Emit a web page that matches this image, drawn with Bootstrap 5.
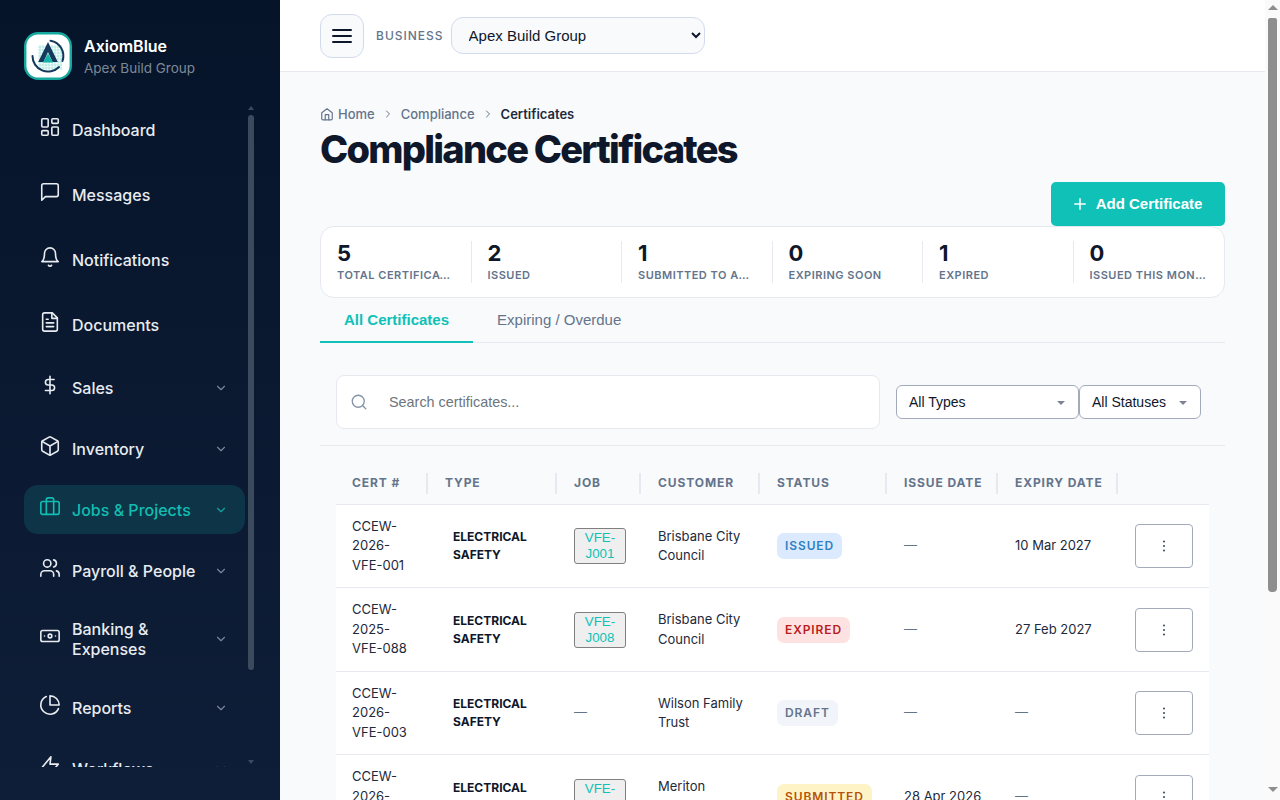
<!DOCTYPE html>
<html lang="en">
<head>
    <meta charset="UTF-8">
    <meta name="viewport" content="width=device-width, initial-scale=1.0">
    <title>Compliance Certificates</title>
    <link href="https://cdn.jsdelivr.net/npm/bootstrap@5.3.3/dist/css/bootstrap.min.css" rel="stylesheet">
    <style>
        body { font-family: "Inter", sans-serif; background: #f8fafc; color: #0f172a; }
        /* sidebar */
        .side-panel { width: 280px; height: 100vh; position: sticky; top: 0; flex-shrink: 0; background: linear-gradient(180deg, #06142a 0%, #0f1e38 100%); padding: 32px 24px 33px; }
        .brand-row { gap: 12px; }
        .brand-logo { width: 48px; height: 48px; flex-shrink: 0; }
        .brand-name { font-size: 16px; font-weight: 600; line-height: 20px; color: #fff; margin-top: 4px; }
        .brand-sub { font-size: 13.5px; line-height: 20px; margin-top: 2px; color: #7d8897; }
        .nav-holder { margin-top: 23px; min-height: 0; }
        .side-nav { width: 221px; overflow: hidden; gap: 12px; flex-wrap: nowrap; min-height: 0; }
        .side-link { display: flex; align-items: center; flex-shrink: 0; min-height: 53px; padding: 12px 17px 12px 15px; font-size: 16px; font-weight: 500; line-height: 20px; color: #e8ecf1; border-radius: 14px; text-decoration: none; }
        .side-link.has-sub { min-height: 49px; }
        .side-link .ico { width: 22px; height: 22px; margin-right: 11px; margin-top: -6px; flex-shrink: 0; fill: none; stroke: currentColor; stroke-width: 1.75; stroke-linecap: round; stroke-linejoin: round; }
        .side-link .chev { width: 14px; height: 14px; margin-left: auto; flex-shrink: 0; fill: none; stroke: #79859a; stroke-width: 2; stroke-linecap: round; stroke-linejoin: round; }
        .side-link.current { background: #0e3547; color: #11bdb2; }
        .side-link.current .chev { stroke: #11a7a0; }
        /* the two scrollbars */
        .nav-rail { width: 11px; flex-shrink: 0; padding: 3px 0; }
        .nav-rail .rail-up { border-bottom: 4px solid #3c4a5e; border-left: 3px solid transparent; border-right: 3px solid transparent; width: 0; margin: 0 auto; }
        .nav-rail .rail-down { border-top: 4px solid #3c4a5e; border-left: 3px solid transparent; border-right: 3px solid transparent; width: 0; margin: 90px auto 0; }
        .nav-rail .rail-thumb { width: 6px; height: 555px; margin: 5px auto 0; background: #3c4a5e; border-radius: 3px; }
        .page-rail { width: 15px; height: 100vh; position: sticky; top: 0; flex-shrink: 0; background: #fafafa; padding-top: 5px; }
        .page-rail .rail-up { border-bottom: 5px solid #8e8e8e; border-left: 5px solid transparent; border-right: 5px solid transparent; width: 0; margin: 0 0 0 3px; }
        .page-rail .rail-thumb { width: 9px; height: 574px; margin: 8px 0 0 3px; background: #8e8e8e; border-radius: 2px 2px 4px 4px; }
        .page-rail .rail-down { border-top: 5px solid #8e8e8e; border-left: 5px solid transparent; border-right: 5px solid transparent; width: 0; margin: 195px 0 0 3px; }
        /* top bar */
        .top-strip { height: 72px; background: #fff; border-bottom: 1px solid #e6e9ef; padding: 0 40px; }
        .menu-btn { width: 44px; height: 44px; border: 1px solid #d2daee; border-radius: 12px; background: #f8fafc; padding: 0; }
        .biz-label { font-size: 12px; font-weight: 500; letter-spacing: 1px; color: #64748b; margin: 0 7px 0 12px; }
        .biz-select { width: 254px; height: 37px; border: 1px solid #d2daee; border-radius: 12px; background-color: #f8fafc; padding: 0 10px 0 13px; font-family: "Liberation Sans", sans-serif; font-size: 15px; color: #0f172a; }
        /* page head */
        .page-body { padding: 34px 40px 150px; }
        .crumbs { font-size: 13px; font-weight: 500; line-height: 16px; color: #64748b; }
        .crumbs a { color: #64748b; text-decoration: none; }
        .crumbs b { font-weight: 600; color: #1e293b; }
        .crumbs svg { fill: none; stroke: #64748b; stroke-width: 2; stroke-linecap: round; stroke-linejoin: round; }
        .crumbs .sep { margin: 0 7px; }
        .page-title { font-size: 38px; font-weight: 800; line-height: 46px; letter-spacing: -1.75px; color: #0f172a; margin: 4px 0 10px; }
        .add-btn { height: 44px; width: 174px; background: #0fc1b6; border: 0; border-radius: 5px; color: #fff; font-family: "Liberation Sans", sans-serif; font-size: 15px; font-weight: 700; padding: 0; gap: 10px; }
        .add-btn:hover { background: #0fc1b6; color: #fff; }
        /* stats */
        .stat-strip { background: #fff; border: 1px solid #e6e9ef; border-radius: 14px; padding: 14px 0; display: grid; grid-template-columns: repeat(6, 1fr); }
        .stat-cell { padding: 0 16px; border-right: 1px solid #e6e9ef; min-width: 0; height: 42px; }
        .stat-cell:last-child { border-right: 0; }
        .stat-num { font-size: 22px; font-weight: 700; line-height: 25px; color: #0f172a; }
        .stat-lbl { font-size: 11px; font-weight: 600; line-height: 19px; letter-spacing: .5px; text-transform: uppercase; color: #64748b; white-space: nowrap; overflow: hidden; text-overflow: ellipsis; }
        /* tabs */
        .cert-tabs { border-bottom: 1px solid #e6e9ef; }
        .cert-tabs .nav-link { height: 45px; padding: 0 24px; border: 0; border-bottom: 2px solid transparent; border-radius: 0; margin-bottom: -1px; font-family: "Liberation Sans", sans-serif; font-size: 15px; line-height: 44px; color: #64748b; background: none; }
        .cert-tabs .nav-link.active { color: #0fc1b6; font-weight: 700; border-bottom-color: #0fc1b6; background: none; }
        /* toolbar */
        .tool-row { padding: 32px 24px 16px 16px; border-bottom: 1px solid #e6e9ef; }
        .search-box { height: 54px; flex: 1; background: #fff; border: 1px solid #e6e9ef; border-radius: 8px; padding-left: 13px; margin-right: 16px; }
        .search-box svg { flex-shrink: 0; fill: none; stroke: #8593a8; stroke-width: 1.75; stroke-linecap: round; }
        .search-box .form-control { border: 0; background: none; box-shadow: none; font-family: "Liberation Sans", sans-serif; font-size: 14.4px; padding: 2px 0 0 21px; }
        .search-box .form-control::placeholder { color: #6c757d; }
        .pick-btn { height: 34px; background: #fff; border: 1px solid #a3abbb; border-radius: 6px; font-family: "Liberation Sans", sans-serif; font-size: 14px; color: #0f172a; padding: 1px 13px 0 12px; display: flex; align-items: center; justify-content: space-between; }
        .pick-btn::after { content: ""; border-top: 4px solid #7c8494; border-left: 4px solid transparent; border-right: 4px solid transparent; }
        .pick-types { width: 183px; }
        .pick-status { width: 122px; }
        /* table */
        .cert-wrap { margin: 16px 16px 0; }
        .cert-table { table-layout: fixed; width: 873px; margin: 0; font-size: 13px; line-height: 19.5px; }
        .cert-table th, .cert-table td { padding: 12px 15px 12px 17px; vertical-align: middle; border-bottom: 1px solid #e6e9ef; color: #1e293b; }
        .cert-table th { position: relative; height: 42.4px; padding-top: 0; padding-bottom: 0; background: #f8fafc; font-size: 12px; font-weight: 700; letter-spacing: .9px; text-transform: uppercase; color: #64748b; white-space: nowrap; }
        .cert-table th:not(:last-child)::after { content: ""; position: absolute; right: 0; top: 11px; height: 21px; width: 2px; background: #e6e9ef; }
        .cert-table td { background: #fff; }
        .cert-table th:first-child, .cert-table td:first-child { padding-left: 16px; padding-right: 16px; }
        .cert-table td.none-dash { color: #64748b; }
        .c-cert { width: 92px; } .c-type { width: 129px; } .c-job { width: 84px; } .c-cust { width: 119px; }
        .c-stat { width: 127px; } .c-issue { width: 111px; } .c-exp { width: 120px; } .c-act { width: 91px; }
        .cert-table .pin-col { position: sticky; right: 0; padding: 0 16px 0 17px; box-shadow: -2px 0 3px rgba(15, 23, 42, .025); }
        .type-txt { display: block; padding-left: 8px; font-size: 12px; font-weight: 700; line-height: 18px; text-transform: uppercase; color: #0f172a; }
        .job-chip { width: 52px; padding: 1px 6px; font-family: "Liberation Sans", sans-serif; font-size: 13.333px; line-height: 16px; color: #0fc1b6; background: #efefef; border: 1px solid #808080; border-radius: 3px; }
        .state-tag { display: inline-block; height: 26px; padding: 0 8px; border-radius: 7px; font-size: 12px; font-weight: 600; line-height: 26px; letter-spacing: .9px; text-transform: uppercase; }
        .st-issued { background: #dbeafe; color: #2f80c2; }
        .st-expired { background: #fee2e2; color: #b91c1c; }
        .st-draft { background: #f1f5f9; color: #64748b; }
        .st-sub { background: #fef3c7; color: #b45309; }
        .kebab-btn { width: 58px; height: 44px; background: #fff; border: 1px solid #a3abbb; border-radius: 4px; padding: 0; display: flex; align-items: center; justify-content: center; }
    </style>
</head>
<body>
<div class="d-flex">
    <aside class="side-panel d-flex flex-column">
        <div class="brand-row d-flex align-items-start flex-shrink-0">
            <svg class="brand-logo" viewBox="0 0 48 48">
                <rect x="1.200" y="1.200" width="45.600" height="45.600" rx="13" fill="#fff" stroke="#14a89f" stroke-width="2.400"/>
                <path d="M14 15h24M14 18h24M14 21h24M14 24h24M14 27h24M14 30h24M14 33h24M14 36h24M16 13v25M19 13v25M22 13v25M25 13v25M28 13v25M31 13v25M34 13v25M37 13v25" stroke="#a3e4de" stroke-width=".8"/>
                <path d="M26.500 8.700A15.500 15.500 0 0 1 38.500 29M35 35A15.500 15.500 0 0 1 8.500 24" fill="none" stroke="#14395c" stroke-width="2" stroke-linecap="round"/>
                <path d="M24 10 33.800 30h-5.300L24 20l-4.500 10h-5.300z" fill="#14395c"/>
                <path d="M24 21.500 29 30.500H19z" fill="#14b3a8"/>
            </svg>
            <div>
                <div class="brand-name">AxiomBlue</div>
                <div class="brand-sub">Apex Build Group</div>
            </div>
        </div>
        <div class="nav-holder d-flex flex-grow-1">
            <nav class="side-nav nav flex-column">
                <a class="side-link" href="#"><svg class="ico" viewBox="0 0 24 24"><rect x="3" y="3" width="7" height="9" rx="1"/><rect x="14" y="3" width="7" height="5" rx="1"/><rect x="14" y="12" width="7" height="9" rx="1"/><rect x="3" y="16" width="7" height="5" rx="1"/></svg>Dashboard</a>
                <a class="side-link" href="#"><svg class="ico" viewBox="0 0 24 24"><path d="M21 15a2 2 0 0 1-2 2H7l-4 4V5a2 2 0 0 1 2-2h14a2 2 0 0 1 2 2z"/></svg>Messages</a>
                <a class="side-link" href="#"><svg class="ico" viewBox="0 0 24 24"><path d="M6 8a6 6 0 0 1 12 0c0 7 3 9 3 9H3s3-2 3-9"/><path d="M10.300 21a1.940 1.940 0 0 0 3.400 0"/></svg>Notifications</a>
                <a class="side-link" href="#"><svg class="ico" viewBox="0 0 24 24"><path d="M14.500 2H6a2 2 0 0 0-2 2v16a2 2 0 0 0 2 2h12a2 2 0 0 0 2-2V7.500L14.500 2z"/><path d="M14 2v6h6M16 13H8M16 17H8M10 9H8"/></svg>Documents</a>
                <a class="side-link has-sub" href="#"><svg class="ico" viewBox="0 0 24 24"><path d="M12 2.500v19M16.500 6H10a3 3 0 0 0 0 6h4a3 3 0 0 1 0 6H7"/></svg>Sales<svg class="chev" viewBox="0 0 24 24"><path d="m6 9 6 6 6-6"/></svg></a>
                <a class="side-link has-sub" href="#"><svg class="ico" viewBox="0 0 24 24"><path d="M21 8a2 2 0 0 0-1-1.730l-7-4a2 2 0 0 0-2 0l-7 4A2 2 0 0 0 3 8v8a2 2 0 0 0 1 1.730l7 4a2 2 0 0 0 2 0l7-4A2 2 0 0 0 21 16Z"/><path d="m3.300 7 8.700 5 8.700-5M12 22V12"/></svg>Inventory<svg class="chev" viewBox="0 0 24 24"><path d="m6 9 6 6 6-6"/></svg></a>
                <a class="side-link has-sub current" href="#"><svg class="ico" viewBox="0 0 24 24"><rect x="2" y="6" width="20" height="14" rx="2"/><path d="M16 20V4a2 2 0 0 0-2-2h-4a2 2 0 0 0-2 2v16"/></svg>Jobs &amp; Projects<svg class="chev" viewBox="0 0 24 24"><path d="m6 9 6 6 6-6"/></svg></a>
                <a class="side-link has-sub" href="#"><svg class="ico" viewBox="0 0 24 24"><path d="M16 21v-2a4 4 0 0 0-4-4H6a4 4 0 0 0-4 4v2"/><circle cx="9" cy="7" r="4"/><path d="M22 21v-2a4 4 0 0 0-3-3.870M16 3.130a4 4 0 0 1 0 7.750"/></svg>Payroll &amp; People<svg class="chev" viewBox="0 0 24 24"><path d="m6 9 6 6 6-6"/></svg></a>
                <a class="side-link has-sub" href="#"><svg class="ico" viewBox="0 0 24 24"><rect x="2" y="6" width="20" height="12" rx="2"/><circle cx="12" cy="12" r="2"/><path d="M6 12h.01M18 12h.01"/></svg><span>Banking &amp; Expenses</span><svg class="chev" viewBox="0 0 24 24"><path d="m6 9 6 6 6-6"/></svg></a>
                <a class="side-link has-sub" href="#"><svg class="ico" viewBox="0 0 24 24"><path d="M21.210 15.890A10 10 0 1 1 8 2.830"/><path d="M22 12A10 10 0 0 0 12 2v10z"/></svg>Reports<svg class="chev" viewBox="0 0 24 24"><path d="m6 9 6 6 6-6"/></svg></a>
                <a class="side-link has-sub" href="#"><svg class="ico" viewBox="0 0 24 24"><path d="M13 2 3 14h9l-1 8 10-12h-9l1-8z"/></svg>Workflows<svg class="chev" viewBox="0 0 24 24"><path d="m6 9 6 6 6-6"/></svg></a>
            </nav>
            <div class="nav-rail">
                <div class="rail-up"></div>
                <div class="rail-thumb"></div>
                <div class="rail-down"></div>
            </div>
        </div>
    </aside>

    <div class="flex-grow-1" style="min-width:0">
        <header class="top-strip d-flex align-items-center">
            <button class="menu-btn d-flex align-items-center justify-content-center" type="button" aria-label="Menu">
                <svg width="20" height="16" viewBox="0 0 20 16"><path d="M1 2h18M1 8h18M1 14h18" stroke="#0f172a" stroke-width="2" stroke-linecap="round"/></svg>
            </button>
            <span class="biz-label">BUSINESS</span>
            <select class="biz-select"><option>Apex Build Group</option></select>
        </header>

        <main class="page-body">
            <div class="crumbs d-flex align-items-center">
                <svg width="14" height="14" viewBox="0 0 24 24" class="me-1"><path d="m3 10 9-7 9 7v10a2 2 0 0 1-2 2H5a2 2 0 0 1-2-2z"/><path d="M9 22v-9h6v9"/></svg>
                <a href="#">Home</a>
                <svg width="12" height="12" viewBox="0 0 24 24" class="sep"><path d="m9 6 6 6-6 6"/></svg>
                <a href="#">Compliance</a>
                <svg width="12" height="12" viewBox="0 0 24 24" class="sep"><path d="m9 6 6 6-6 6"/></svg>
                <b>Certificates</b>
            </div>
            <h1 class="page-title">Compliance Certificates</h1>
            <div class="d-flex justify-content-end">
                <button class="btn add-btn d-flex align-items-center justify-content-center" type="button">
                    <svg width="12" height="12" viewBox="0 0 12 12"><path d="M6 .8v10.400M.8 6h10.400" stroke="#fff" stroke-width="1.500" stroke-linecap="round"/></svg>
                    Add Certificate
                </button>
            </div>

            <div class="stat-strip">
                <div class="stat-cell"><div class="stat-num">5</div><div class="stat-lbl">Total Certificates</div></div>
                <div class="stat-cell"><div class="stat-num">2</div><div class="stat-lbl">Issued</div></div>
                <div class="stat-cell"><div class="stat-num">1</div><div class="stat-lbl">Submitted to Authority</div></div>
                <div class="stat-cell"><div class="stat-num">0</div><div class="stat-lbl">Expiring Soon</div></div>
                <div class="stat-cell"><div class="stat-num">1</div><div class="stat-lbl">Expired</div></div>
                <div class="stat-cell"><div class="stat-num">0</div><div class="stat-lbl">Issued This Month</div></div>
            </div>

            <ul class="nav cert-tabs">
                <li class="nav-item"><a class="nav-link active" href="#">All Certificates</a></li>
                <li class="nav-item"><a class="nav-link" href="#">Expiring / Overdue</a></li>
            </ul>

            <div class="tool-row d-flex align-items-center">
                <div class="search-box d-flex align-items-center">
                    <svg width="18" height="18" viewBox="0 0 24 24"><circle cx="11" cy="11" r="8"/><path d="m21 21-4.300-4.300"/></svg>
                    <input class="form-control" type="text" placeholder="Search certificates...">
                </div>
                <button class="pick-btn pick-types" type="button">All Types</button>
                <button class="pick-btn pick-status" type="button">All Statuses</button>
            </div>

            <div class="cert-wrap">
                <table class="table cert-table">
                    <colgroup><col class="c-cert"><col class="c-type"><col class="c-job"><col class="c-cust"><col class="c-stat"><col class="c-issue"><col class="c-exp"><col class="c-act"></colgroup>
                    <thead>
                        <tr><th>Cert #</th><th>Type</th><th>Job</th><th>Customer</th><th>Status</th><th>Issue Date</th><th>Expiry Date</th><th class="pin-col"></th></tr>
                    </thead>
                    <tbody>
                        <tr>
                            <td>CCEW-2026-VFE-001</td><td><span class="type-txt">Electrical Safety</span></td>
                            <td><button class="job-chip" type="button">VFE-J001</button></td><td>Brisbane City Council</td>
                            <td><span class="state-tag st-issued">Issued</span></td><td class="none-dash">—</td><td>10 Mar 2027</td>
                            <td class="pin-col"><button class="kebab-btn" type="button" aria-label="Actions"><svg width="4" height="12" viewBox="0 0 4 12"><path d="M2 1.500v.01M2 6v.01M2 10.500v.01" stroke="#475569" stroke-width="2.200" stroke-linecap="round"/></svg></button></td>
                        </tr>
                        <tr>
                            <td>CCEW-2025-VFE-088</td><td><span class="type-txt">Electrical Safety</span></td>
                            <td><button class="job-chip" type="button">VFE-J008</button></td><td>Brisbane City Council</td>
                            <td><span class="state-tag st-expired">Expired</span></td><td class="none-dash">—</td><td>27 Feb 2027</td>
                            <td class="pin-col"><button class="kebab-btn" type="button" aria-label="Actions"><svg width="4" height="12" viewBox="0 0 4 12"><path d="M2 1.500v.01M2 6v.01M2 10.500v.01" stroke="#475569" stroke-width="2.200" stroke-linecap="round"/></svg></button></td>
                        </tr>
                        <tr>
                            <td>CCEW-2026-VFE-003</td><td><span class="type-txt">Electrical Safety</span></td>
                            <td class="none-dash">—</td><td>Wilson Family Trust</td>
                            <td><span class="state-tag st-draft">Draft</span></td><td class="none-dash">—</td><td class="none-dash">—</td>
                            <td class="pin-col"><button class="kebab-btn" type="button" aria-label="Actions"><svg width="4" height="12" viewBox="0 0 4 12"><path d="M2 1.500v.01M2 6v.01M2 10.500v.01" stroke="#475569" stroke-width="2.200" stroke-linecap="round"/></svg></button></td>
                        </tr>
                        <tr>
                            <td>CCEW-2026-VFE-002</td><td><span class="type-txt">Electrical Safety</span></td>
                            <td><button class="job-chip" type="button">VFE-J002</button></td><td>Meriton Group Pty</td>
                            <td><span class="state-tag st-sub">Submitted</span></td><td>28 Apr 2026</td><td class="none-dash">—</td>
                            <td class="pin-col"><button class="kebab-btn" type="button" aria-label="Actions"><svg width="4" height="12" viewBox="0 0 4 12"><path d="M2 1.500v.01M2 6v.01M2 10.500v.01" stroke="#475569" stroke-width="2.200" stroke-linecap="round"/></svg></button></td>
                        </tr>
                        <tr>
                            <td>CCEW-2026-VFE-004</td><td><span class="type-txt">Electrical Safety</span></td>
                            <td><button class="job-chip" type="button">VFE-J004</button></td><td>Brisbane City Council</td>
                            <td><span class="state-tag st-issued">Issued</span></td><td>12 Mar 2026</td><td>12 Mar 2027</td>
                            <td class="pin-col"><button class="kebab-btn" type="button" aria-label="Actions"><svg width="4" height="12" viewBox="0 0 4 12"><path d="M2 1.500v.01M2 6v.01M2 10.500v.01" stroke="#475569" stroke-width="2.200" stroke-linecap="round"/></svg></button></td>
                        </tr>
                    </tbody>
                </table>
            </div>
        </main>
    </div>

    <div class="page-rail">
        <div class="rail-up"></div>
        <div class="rail-thumb"></div>
        <div class="rail-down"></div>
    </div>
</div>
<script src="https://cdn.jsdelivr.net/npm/bootstrap@5.3.3/dist/js/bootstrap.bundle.min.js"></script>
</body>
</html>
